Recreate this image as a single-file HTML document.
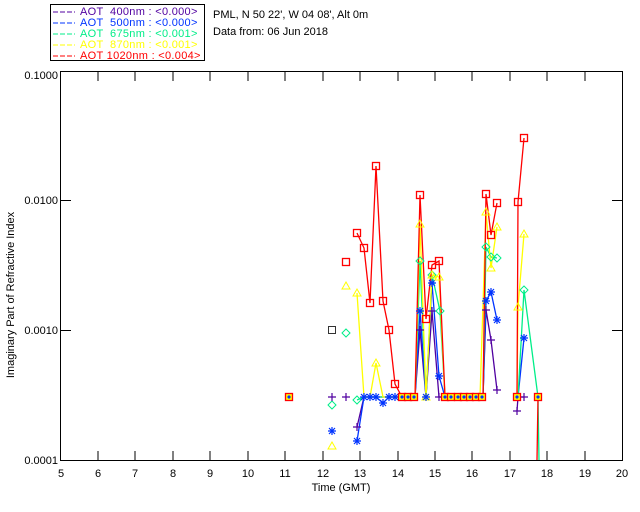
<!DOCTYPE html>
<html><head><meta charset="utf-8"><style>
body{margin:0;background:#fff;width:640px;height:512px;overflow:hidden}
svg{display:block}
text{font-family:"Liberation Sans",sans-serif;font-size:11px}
</style></head><body>
<svg width="640" height="512" viewBox="0 0 640 512" xmlns="http://www.w3.org/2000/svg">
<defs>
<g id="sq"><rect x="-3.5" y="-3.5" width="7" height="7" fill="none" stroke="#f00" stroke-width="1.3"/></g>
<g id="tri"><path d="M0,-4 L4,3 L-4,3 Z" fill="none" stroke="#ff0" stroke-width="1"/></g>
<g id="dia"><path d="M0,-4 L4,0 L0,4 L-4,0 Z" fill="none" stroke="#0e8" stroke-width="1"/></g>
<g id="ast" stroke="#0033ff" stroke-width="1.2"><path d="M-4,0H4M0,-4V4M-3,-3L3,3M-3,3L3,-3"/></g>
<g id="pl" stroke="#5000a0" stroke-width="1.2"><path d="M-4,0H4M0,-4V4"/></g>
<g id="base"><rect x="-3.5" y="-3.5" width="7" height="7" fill="#ff0" stroke="#f00" stroke-width="1.3"/><circle r="1.6" fill="#0033ff"/></g>
</defs>
<!-- legend -->
<rect x="50.5" y="4.5" width="154" height="56" fill="none" stroke="#000"/>
<g font-size="11" letter-spacing="0.3">
<line x1="53" y1="12" x2="75" y2="12" stroke="#5000a0" stroke-dasharray="5,2"/><text x="80" y="15" fill="#5000a0" xml:space="preserve">AOT  400nm : &lt;0.000&gt;</text>
<line x1="53" y1="23" x2="75" y2="23" stroke="#0033ff" stroke-dasharray="5,2"/><text x="80" y="26" fill="#0033ff" xml:space="preserve">AOT  500nm : &lt;0.000&gt;</text>
<line x1="53" y1="34" x2="75" y2="34" stroke="#00ee88" stroke-dasharray="5,2"/><text x="80" y="37" fill="#00ee88" xml:space="preserve">AOT  675nm : &lt;0.001&gt;</text>
<line x1="53" y1="45" x2="75" y2="45" stroke="#ffff00" stroke-dasharray="5,2"/><text x="80" y="48" fill="#ffff00" xml:space="preserve">AOT  870nm : &lt;0.001&gt;</text>
<line x1="53" y1="56" x2="75" y2="56" stroke="#ff0000" stroke-dasharray="5,2"/><text x="80" y="59" fill="#ff0000" xml:space="preserve">AOT 1020nm : &lt;0.004&gt;</text>
</g>
<text x="213" y="18">PML, N 50 22', W 04 08', Alt 0m</text>
<text x="213" y="35">Data from: 06 Jun 2018</text>
<!-- frame -->
<rect x="60.5" y="71.5" width="562" height="389" fill="none" stroke="#000"/>
<g stroke="#000">
<path d="M98,460v-9M135,460v-9M173,460v-9M210,460v-9M248,460v-9M285,460v-9M323,460v-9M360,460v-9M398,460v-9M435,460v-9M472,460v-9M510,460v-9M547,460v-9M585,460v-9"/>
<path d="M98,72v9M135,72v9M173,72v9M210,72v9M248,72v9M285,72v9M323,72v9M360,72v9M398,72v9M435,72v9M472,72v9M510,72v9M547,72v9M585,72v9"/>
<path d="M61,200.5h10M61,330.5h10M622,200.5h-10M622,330.5h-10"/>
</g>
<g font-size="11" text-anchor="end">
<text x="58" y="79">0.1000</text><text x="58" y="204">0.0100</text><text x="58" y="334">0.0010</text><text x="58" y="464">0.0001</text>
</g>
<g font-size="11" text-anchor="middle">
<text x="61" y="477">5</text><text x="98" y="477">6</text><text x="135" y="477">7</text><text x="173" y="477">8</text><text x="210" y="477">9</text><text x="248" y="477">10</text><text x="285" y="477">11</text><text x="323" y="477">12</text><text x="360" y="477">13</text><text x="398" y="477">14</text><text x="435" y="477">15</text><text x="472" y="477">16</text><text x="510" y="477">17</text><text x="547" y="477">18</text><text x="585" y="477">19</text><text x="622" y="477">20</text>
<text x="341" y="491">Time (GMT)</text>
<text transform="translate(14,295) rotate(-90)">Imaginary Part of Refractive Index</text>
</g>
<!-- lines -->
<g fill="none" stroke-width="1.3">
<polyline stroke="#5000a0" points="357,427 364,397 415,397 420,330 426,397 432,311 439,397 445,397 483,397 486,310 491,340 497,390"/>
<polyline stroke="#5000a0" points="517,411 518,397 524,397"/>
<polyline stroke="#0033ff" points="357,441 364,397 376,397 383,403 389,397 415,397 420,311 426,397 432,283 439,376 445,397 483,397 486,301 491,292 497,320"/>
<polyline stroke="#0033ff" points="518,397 524,338"/>
<polyline stroke="#00ee88" points="357,400 364,397 415,397 420,261 426,397 432,275 440,311 445,397 483,397 486,247 491,257 497,258"/>
<polyline stroke="#00ee88" points="518,397 524,290 538,397 539,460"/>
<polyline stroke="#ffff00" points="357,293 364,397 370,397 376,363 383,397 415,397 420,224 426,397 432,275 439,277 445,397 480,397 486,212 491,268 497,227"/>
<polyline stroke="#ffff00" points="517,397 518,307 524,234"/>
<polyline stroke="#ff0000" points="357,233 364,248 370,303 376,166 383,301 389,330 395,384 402,397 415,397 420,195 426,319 432,265 439,261 445,397 483,397 486,194 491,235 497,203"/>
<polyline stroke="#ff0000" points="517,397 518,202 524,138"/>
<polyline stroke="#ff0000" points="538,397 537,460"/>
</g>
<!-- markers -->
<rect x="328.5" y="326.5" width="7" height="7" fill="none" stroke="#333" stroke-width="1"/>
<use href="#sq" x="346" y="262"/>
<use href="#tri" x="332" y="446"/><use href="#tri" x="346" y="286"/>
<use href="#dia" x="332" y="405"/><use href="#dia" x="346" y="333"/><use href="#dia" x="357" y="400"/>
<use href="#ast" x="332" y="431"/><use href="#ast" x="357" y="441"/><use href="#ast" x="383" y="403"/>
<use href="#pl" x="332" y="397"/><use href="#pl" x="346" y="397"/><use href="#pl" x="357" y="427"/><use href="#pl" x="517" y="411"/><use href="#pl" x="524" y="397"/><use href="#pl" x="497" y="390"/><use href="#pl" x="491" y="340"/><use href="#pl" x="486" y="310"/><use href="#pl" x="420" y="330"/><use href="#pl" x="432" y="311"/><use href="#pl" x="439" y="397"/>
<use href="#ast" x="420" y="311"/><use href="#ast" x="432" y="283"/><use href="#ast" x="439" y="376"/><use href="#ast" x="486" y="301"/><use href="#ast" x="491" y="292"/><use href="#ast" x="497" y="320"/><use href="#ast" x="524" y="338"/>
<use href="#dia" x="420" y="261"/><use href="#dia" x="432" y="275"/><use href="#dia" x="440" y="311"/><use href="#dia" x="486" y="247"/><use href="#dia" x="491" y="257"/><use href="#dia" x="497" y="258"/><use href="#dia" x="524" y="290"/>
<use href="#tri" x="357" y="293"/><use href="#tri" x="376" y="363"/><use href="#tri" x="420" y="224"/><use href="#tri" x="432" y="275"/><use href="#tri" x="439" y="277"/><use href="#tri" x="486" y="212"/><use href="#tri" x="491" y="268"/><use href="#tri" x="497" y="227"/><use href="#tri" x="518" y="307"/><use href="#tri" x="524" y="234"/><use href="#tri" x="426" y="397"/>
<use href="#sq" x="357" y="233"/><use href="#sq" x="364" y="248"/><use href="#sq" x="370" y="303"/><use href="#sq" x="376" y="166"/><use href="#sq" x="383" y="301"/><use href="#sq" x="389" y="330"/><use href="#sq" x="395" y="384"/><use href="#sq" x="420" y="195"/><use href="#sq" x="426" y="319"/><use href="#sq" x="432" y="265"/><use href="#sq" x="439" y="261"/><use href="#sq" x="486" y="194"/><use href="#sq" x="491" y="235"/><use href="#sq" x="497" y="203"/><use href="#sq" x="518" y="202"/><use href="#sq" x="524" y="138"/>
<use href="#base" x="289" y="397"/>
<use href="#ast" x="364" y="397"/><use href="#ast" x="370" y="397"/><use href="#ast" x="376" y="397"/><use href="#ast" x="389" y="397"/><use href="#ast" x="395" y="397"/>
<use href="#base" x="402" y="397"/><use href="#base" x="408" y="397"/><use href="#base" x="414" y="397"/>
<use href="#ast" x="426" y="397"/>
<use href="#base" x="445" y="397"/><use href="#base" x="451" y="397"/><use href="#base" x="458" y="397"/><use href="#base" x="464" y="397"/><use href="#base" x="470" y="397"/><use href="#base" x="476" y="397"/><use href="#base" x="482" y="397"/>
<use href="#base" x="517" y="397"/><use href="#base" x="538" y="397"/>
</svg>
</body></html>
